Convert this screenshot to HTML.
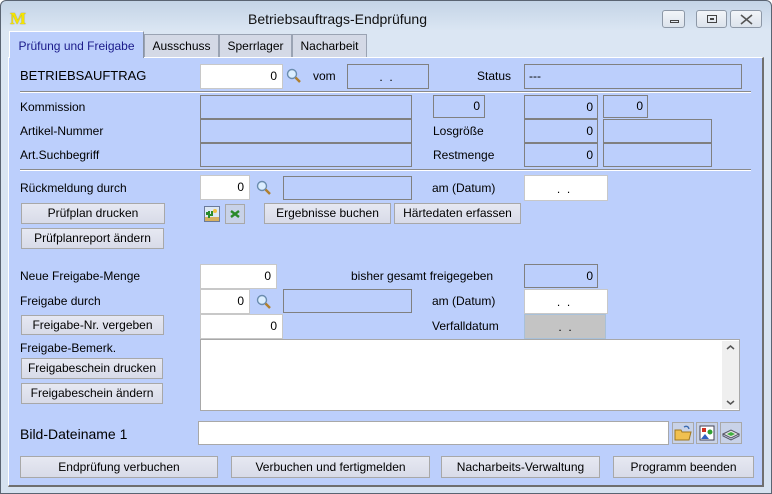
<!DOCTYPE html>
<html><head><meta charset="utf-8"><style>
*{box-sizing:border-box;margin:0;padding:0}
body{width:772px;height:494px;overflow:hidden;font-family:"Liberation Sans",sans-serif;font-size:12px;color:#000;background:#fff;position:relative}
.a{position:absolute}
.win{left:0;top:0;width:772px;height:494px;background:linear-gradient(#c4d4e6,#dbe6f3 30px,#d6e2f0);border:1px solid #5a6472;border-radius:6px 6px 0 0}
.panel{left:8px;top:57px;width:756px;height:430px;background:#bccffc;border-top:1px solid #fff;border-left:1px solid #fff;border-right:2px solid #6f6f6f;border-bottom:2px solid #6f6f6f}
.tab{background:#d4d9e6;border:1px solid #9aa3b3;border-bottom:none;text-align:center;line-height:22px;font-size:12px;top:34px;height:23px}
.tab.sel{background:#bccffc;top:31px;height:27px;color:#1a1a8a;border-color:#fff #8a93a3 #bccffc #fff;line-height:28px}
.l{font-size:12px;line-height:14px}
.f{border:1px solid #808080;background:#bccffc;text-align:right;padding-right:4px;font-size:12px}
.w{background:#fff;border:1px solid #c8c8c8;text-align:right;padding-right:5px;font-size:12px}
.b{background:linear-gradient(#e6e8f2,#d8dbe8);border:1px solid #a8a8a8;text-align:center;font-size:12px;line-height:19px}
.hr{height:2px;border-top:1px solid #8a8a8a;border-bottom:1px solid #fff}
.wb{top:10px;height:18px;border:1px solid #8d98a7;border-radius:3px;background:linear-gradient(#f2f5f9,#dce3ec)}
.ico{border:1px solid #a8a8a8;background:#c8d2e8}
</style></head><body>
<div class="a win"></div>
<div class="a" style="left:10px;top:9px;font-family:'Liberation Serif',serif;font-weight:bold;font-size:17px;color:#f4e400;text-shadow:0 0 1px #8a7a00">M</div>
<div class="a" style="left:248px;top:11px;font-size:14px;color:#111">Betriebsauftrags-Endprüfung</div>
<div class="a wb" style="left:662px;width:23px"><div class="a" style="left:7px;top:9px;width:9px;height:3px;border:1px solid #444"></div></div>
<div class="a wb" style="left:696px;width:31px"><div class="a" style="left:10px;top:4px;width:10px;height:8px;border:1px solid #444"><div class="a" style="left:2px;top:2px;width:4px;height:2px;border:1px solid #444"></div></div></div>
<div class="a wb" style="left:730px;width:32px"><svg class="a" style="left:9px;top:3px" width="13" height="11"><path d="M1 1L12 10M12 1L1 10" stroke="#555" stroke-width="1.6"/></svg></div>

<div class="a panel"></div>
<div class="a tab" style="left:144px;width:75px">Ausschuss</div>
<div class="a tab" style="left:219px;width:73px">Sperrlager</div>
<div class="a tab" style="left:292px;width:75px">Nacharbeit</div>
<div class="a tab sel" style="left:9px;width:135px">Prüfung und Freigabe</div>

<div class="a" style="left:20px;top:68px;font-size:13px">BETRIEBSAUFTRAG</div>
<div class="a w" style="left:200px;top:64px;width:83px;height:25px;line-height:23px">0</div>
<svg class="a" style="left:286px;top:68px" width="16" height="17"><circle cx="6" cy="6" r="4.5" fill="#dbeeff" stroke="#6a8cae" stroke-width="1.4"/><path d="M9.5 9.5 L14 14" stroke="#b08030" stroke-width="2.5"/></svg>
<div class="a l" style="left:313px;top:69px">vom</div>
<div class="a f" style="left:347px;top:64px;width:82px;height:25px;text-align:center;line-height:24px">. &nbsp;.</div>
<div class="a l" style="left:477px;top:69px">Status</div>
<div class="a f" style="left:524px;top:64px;width:218px;height:25px;text-align:left;padding-left:4px;line-height:22px">---</div>
<div class="a hr" style="left:20px;top:91px;width:731px"></div>

<div class="a l" style="left:20px;top:100px">Kommission</div>
<div class="a l" style="left:20px;top:124px">Artikel-Nummer</div>
<div class="a l" style="left:20px;top:148px">Art.Suchbegriff</div>
<div class="a f" style="left:200px;top:95px;width:212px;height:24px"></div>
<div class="a f" style="left:200px;top:119px;width:212px;height:24px"></div>
<div class="a f" style="left:200px;top:143px;width:212px;height:24px"></div>
<div class="a f" style="left:433px;top:95px;width:52px;height:23px;line-height:21px">0</div>
<div class="a l" style="left:433px;top:124px">Losgröße</div>
<div class="a l" style="left:433px;top:148px">Restmenge</div>
<div class="a f" style="left:524px;top:95px;width:74px;height:24px;line-height:22px">0</div>
<div class="a f" style="left:524px;top:119px;width:74px;height:24px;line-height:22px">0</div>
<div class="a f" style="left:524px;top:143px;width:74px;height:24px;line-height:22px">0</div>
<div class="a f" style="left:603px;top:95px;width:45px;height:23px;line-height:21px">0</div>
<div class="a f" style="left:603px;top:119px;width:109px;height:24px"></div>
<div class="a f" style="left:603px;top:143px;width:109px;height:24px"></div>
<div class="a hr" style="left:20px;top:169px;width:731px"></div>

<div class="a l" style="left:20px;top:181px">Rückmeldung durch</div>
<div class="a w" style="left:200px;top:175px;width:50px;height:25px;line-height:23px">0</div>
<svg class="a" style="left:256px;top:180px" width="16" height="17"><circle cx="6" cy="6" r="4.5" fill="#dbeeff" stroke="#6a8cae" stroke-width="1.4"/><path d="M9.5 9.5 L14 14" stroke="#b08030" stroke-width="2.5"/></svg>
<div class="a f" style="left:283px;top:176px;width:129px;height:24px"></div>
<div class="a l" style="left:432px;top:181px">am (Datum)</div>
<div class="a w" style="left:524px;top:175px;width:84px;height:26px;text-align:center;line-height:26px">. &nbsp;.</div>
<div class="a b" style="left:21px;top:203px;width:144px;height:21px">Prüfplan drucken</div>
<div class="a b" style="left:21px;top:228px;width:143px;height:21px">Prüfplanreport ändern</div>
<svg class="a" style="left:204px;top:206px" width="16" height="16"><rect x="0.5" y="0.5" width="15" height="15" fill="#dde8f4" stroke="#6a7a9a"/><rect x="1" y="11" width="14" height="4" fill="#d6b060"/><path d="M5 12V5M5 8H3V6M5 9H8V5" stroke="#2a8a2a" stroke-width="2" fill="none"/><circle cx="11" cy="5" r="2" fill="#f0c040"/></svg>
<div class="a ico" style="left:225px;top:204px;width:20px;height:20px"><svg width="18" height="18"><path d="M5 6L13 12M13 6L5 12" stroke="#2a8a2a" stroke-width="2.4"/></svg></div>
<div class="a b" style="left:264px;top:203px;width:127px;height:21px">Ergebnisse buchen</div>
<div class="a b" style="left:394px;top:203px;width:127px;height:21px">Härtedaten erfassen</div>

<div class="a l" style="left:20px;top:269px">Neue Freigabe-Menge</div>
<div class="a w" style="left:200px;top:264px;width:77px;height:25px;line-height:23px">0</div>
<div class="a l" style="left:351px;top:269px">bisher gesamt freigegeben</div>
<div class="a f" style="left:524px;top:264px;width:74px;height:24px;line-height:22px">0</div>
<div class="a l" style="left:20px;top:294px">Freigabe durch</div>
<div class="a w" style="left:200px;top:289px;width:50px;height:25px;line-height:23px">0</div>
<svg class="a" style="left:256px;top:294px" width="16" height="17"><circle cx="6" cy="6" r="4.5" fill="#dbeeff" stroke="#6a8cae" stroke-width="1.4"/><path d="M9.5 9.5 L14 14" stroke="#b08030" stroke-width="2.5"/></svg>
<div class="a f" style="left:283px;top:289px;width:129px;height:24px"></div>
<div class="a l" style="left:432px;top:294px">am (Datum)</div>
<div class="a w" style="left:524px;top:289px;width:84px;height:25px;text-align:center;line-height:25px">. &nbsp;.</div>
<div class="a b" style="left:21px;top:315px;width:143px;height:20px;line-height:18px">Freigabe-Nr. vergeben</div>
<div class="a w" style="left:200px;top:314px;width:83px;height:25px;line-height:23px">0</div>
<div class="a l" style="left:432px;top:319px">Verfalldatum</div>
<div class="a" style="left:524px;top:314px;width:82px;height:25px;background:#c4c4c4;border:1px solid #a8c0d8;text-align:center;line-height:25px">. &nbsp;.</div>

<div class="a l" style="left:20px;top:341px">Freigabe-Bemerk.</div>
<div class="a" style="left:200px;top:339px;width:540px;height:72px;background:#fff;border:1px solid #a8a8a8"></div>
<div class="a" style="left:722px;top:341px;width:17px;height:68px;background:#efefef"><svg width="17" height="68"><path d="M5 8L8.5 5L12 8M5 60L8.5 63L12 60" stroke="#555" stroke-width="1.5" fill="none"/></svg></div>
<div class="a b" style="left:21px;top:358px;width:142px;height:21px">Freigabeschein drucken</div>
<div class="a b" style="left:21px;top:383px;width:142px;height:21px">Freigabeschein ändern</div>

<div class="a" style="left:20px;top:426px;font-size:14px">Bild-Dateiname 1</div>
<div class="a" style="left:198px;top:421px;width:471px;height:24px;background:#fff;border:1px solid #a8a8a8"></div>
<div class="a ico" style="left:672px;top:422px;width:22px;height:22px"><svg width="20" height="20"><path d="M2 7H8L9 9H18L16 17H2Z" fill="#f0c050" stroke="#a07820"/><path d="M11 4Q15 2 16 6" stroke="#3a6ab0" fill="none" stroke-width="1.3"/></svg></div>
<div class="a ico" style="left:696px;top:422px;width:22px;height:22px"><svg width="20" height="20"><rect x="3" y="3" width="14" height="14" fill="#fff" stroke="#445"/><rect x="5" y="5" width="4" height="4" fill="#d03020"/><circle cx="13" cy="9" r="2.5" fill="#30a030"/><path d="M4 16L8 11L12 16Z" fill="#3060c0"/></svg></div>
<div class="a ico" style="left:720px;top:422px;width:22px;height:22px"><svg width="20" height="20"><path d="M2 11L10 7L18 11L10 15Z" fill="#e0e0e0" stroke="#556"/><path d="M6 11L10 9L14 11L10 13Z" fill="#40b040"/><path d="M2 11V13L10 17L18 13V11" fill="none" stroke="#556"/></svg></div>

<div class="a b" style="left:20px;top:456px;width:198px;height:22px;line-height:20px">Endprüfung verbuchen</div>
<div class="a b" style="left:231px;top:456px;width:199px;height:22px;line-height:20px">Verbuchen und fertigmelden</div>
<div class="a b" style="left:441px;top:456px;width:159px;height:22px;line-height:20px">Nacharbeits-Verwaltung</div>
<div class="a b" style="left:613px;top:456px;width:141px;height:22px;line-height:20px">Programm beenden</div>
</body></html>
